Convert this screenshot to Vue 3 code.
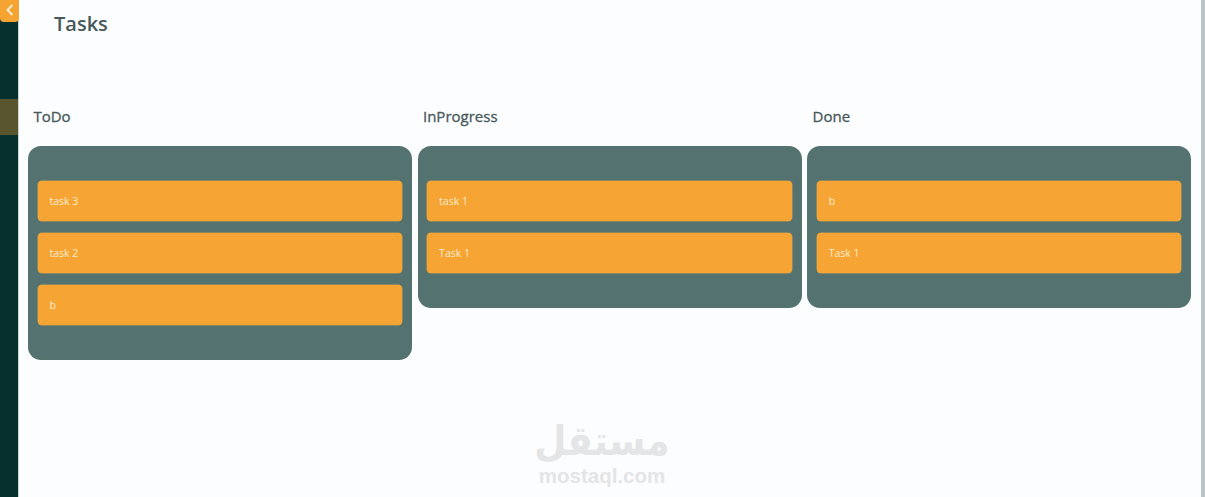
<script setup>
const columns = [
  { title: 'ToDo', tasks: ['task 3', 'task 2', 'b'] },
  { title: 'InProgress', tasks: ['task 1', 'Task 1'] },
  { title: 'Done', tasks: ['b', 'Task 1'] },
]
</script>

<template>
  <div class="page">
    <aside class="sidebar">
      <button class="toggle" aria-label="Collapse">
        <svg width="10" height="14" viewBox="0 0 10 14" fill="none">
          <path d="M7.5 2 L2.5 7 L7.5 12" stroke="#fdeccd" stroke-width="2" />
        </svg>
      </button>
      <div class="active-item"></div>
    </aside>
    <main class="main">
      <h1 class="heading">Tasks</h1>
      <div class="board">
        <section v-for="col in columns" :key="col.title" class="column">
          <h2 class="col-title">{{ col.title }}</h2>
          <div class="card">
            <div v-for="(task, i) in col.tasks" :key="i" class="task">{{ task }}</div>
          </div>
        </section>
      </div>
      <div class="watermark">
        <span class="wm-ar" lang="ar" dir="rtl">مستقل</span>
        <span class="wm-en">mostaql.com</span>
      </div>
    </main>
    <div class="scrollbar"></div>
  </div>
</template>

<style scoped>
.page {
  display: flex;
  width: 1205px;
  height: 497px;
  overflow: hidden;
  background: #fcfdfe;
  font-family: "Open Sans", "Noto Sans", sans-serif;
}
.sidebar {
  position: relative;
  flex: 0 0 19px;
  background: #06302e;
  border-right: 1px solid #c4d6d8;
  box-sizing: border-box;
  padding-top: 99px;
}
.toggle {
  position: absolute;
  top: -2px;
  left: 0;
  width: 19px;
  height: 24px;
  padding: 0;
  border: 0;
  border-radius: 0 0 4px 4px;
  background: #f6a431;
  display: flex;
  align-items: center;
  justify-content: center;
}
.active-item {
  height: 36px;
  background: #59552f;
}
.main {
  position: relative;
  flex: 1;
  min-width: 0;
}
.heading {
  margin: 0;
  padding: 10px 0 0 35px;
  height: 97px;
  box-sizing: border-box;
  font-size: 20px;
  line-height: 28px;
  font-weight: 600;
  color: #47585a;
}
.board {
  display: flex;
  gap: 5.6px;
  padding-left: 9px;
}
.column {
  flex: 0 0 384px;
}
.col-title {
  margin: 0;
  padding: 0 0 0 5.4px;
  height: 49px;
  font-size: 15px;
  line-height: 39px;
  font-weight: 400;
  -webkit-text-stroke: 0.3px #47585a;
  color: #47585a;
}
.card {
  display: flex;
  flex-direction: column;
  gap: 12px;
  padding: 35px 10px 35px 9.5px;
  border-radius: 13px;
  background: #547270;
}
.task {
  height: 40px;
  padding-left: 12px;
  border-radius: 4px;
  background: #f6a433;
  box-shadow: 0 0 0 0.5px #c59a4f;
  color: #fdeccd;
  font-size: 10.5px;
  line-height: 41px;
}
.watermark {
  position: absolute;
  left: 516px;
  top: 420px;
  width: 134px;
  display: flex;
  flex-direction: column;
  align-items: center;
  gap: 2px;
  color: #e3e5e6;
  font-weight: 700;
}
.wm-ar {
  font-family: "DejaVu Sans", sans-serif;
  font-size: 37px;
  line-height: 44px;
  transform: scaleY(1.12);
}
.wm-en {
  font-family: "Liberation Sans", sans-serif;
  font-size: 20.5px;
  line-height: 20px;
}
.scrollbar {
  flex: 0 0 4px;
  background: #bcc4c6;
}
</style>

<style>
body { margin: 0; }
</style>
